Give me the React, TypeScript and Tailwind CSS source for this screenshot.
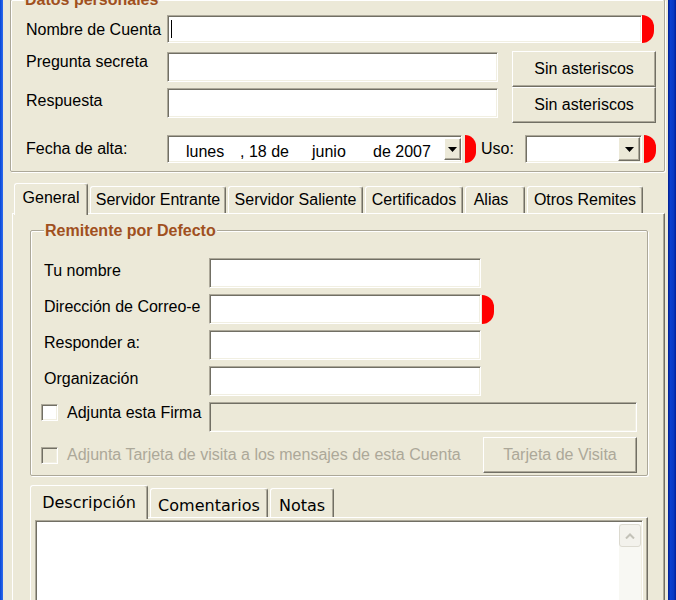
import React from "react";

const sunken =
  "border border-t-[#aca899] border-l-[#aca899] border-b-white border-r-white shadow-[inset_1px_1px_0_#716f64,inset_-1px_-1px_0_#f1efe2]";
const raised =
  "border border-t-white border-l-white border-b-[#716f64] border-r-[#716f64] shadow-[inset_-1px_-1px_0_#aca899]";

type Kids = { className?: string; children?: React.ReactNode; disabled?: boolean };

function Marker({ className = "" }: { className?: string }) {
  return <div className={`shrink-0 rounded-r-full bg-[#ff0000] ${className}`} />;
}

function Input({ className = "", disabled = false, children }: Kids) {
  return (
    <div
      className={`box-border flex shrink-0 items-center ${sunken} ${
        disabled ? "bg-[#ece9d8]" : "bg-white"
      } ${className}`}
    >
      {children}
    </div>
  );
}

function Button({ className = "", disabled = false, children }: Kids) {
  return (
    <button
      type="button"
      className={`box-border flex shrink-0 items-center justify-center bg-[#ece9d8] ${raised} ${
        disabled ? "text-[#aca899]" : "text-black"
      } ${className}`}
    >
      {children}
    </button>
  );
}

function DropButton({ className = "" }: { className?: string }) {
  return (
    <div
      className={`box-border flex shrink-0 items-center justify-center bg-[#ece9d8] ${raised} ${className}`}
    >
      <svg width="9" height="5" viewBox="0 0 9 5">
        <path d="M0 0h9L4.5 5z" fill="#000" />
      </svg>
    </div>
  );
}

function Checkbox({ disabled = false }: { disabled?: boolean }) {
  return (
    <div
      className={`box-border h-[17px] w-[17px] shrink-0 ${sunken} ${
        disabled ? "bg-[#ece9d8]" : "bg-white"
      }`}
    />
  );
}

function GroupBox({
  title,
  className = "",
  children,
}: {
  title: string;
  className?: string;
  children: React.ReactNode;
}) {
  return (
    <div
      className={`relative box-border rounded-[2px] border border-[#aca899] shadow-[inset_1px_1px_0_white,1px_1px_0_white] ${className}`}
    >
      <span className="absolute left-[13px] top-[-9px] bg-[#ece9d8] px-[1px] text-[16px] font-bold leading-[18px] text-[#a0501e]">
        {title}
      </span>
      {children}
    </div>
  );
}

function Tab({
  label,
  className = "",
  selected = false,
}: {
  label: string;
  className?: string;
  selected?: boolean;
}) {
  return (
    <div
      className={`relative box-border flex shrink-0 justify-center whitespace-nowrap rounded-t-[3px] border-l border-r border-t border-l-white border-r-[#716f64] border-t-white bg-[#ece9d8] shadow-[inset_-1px_0_0_#aca899] ${
        selected ? "z-10 -mb-[2px]" : ""
      } ${className}`}
    >
      {label}
    </div>
  );
}

export default function App() {
  return (
    <div className="flex h-[600px] w-[676px] overflow-hidden bg-[#ece9d8] font-['Liberation_Sans',Arial,sans-serif] text-[16px] leading-[18px] text-black">
      <div className="w-[3px] shrink-0 bg-[linear-gradient(to_right,#0847d4,#2f6cf0)]" />

      <div className="flex w-[665px] shrink-0 flex-col">
        {/* Datos personales */}
        <GroupBox
          title="Datos personales"
          className="-mt-[1px] ml-[7px] w-[655px] pb-[8px] pl-[15px] pt-[15px]"
        >
          <div className="flex h-[28px] items-center">
            <span className="mt-[1px] w-[141px] shrink-0">Nombre de Cuenta</span>
            <Input className="h-[28px] w-[475px]">
              <span className="ml-[3px] h-[18px] w-px bg-black" />
            </Input>
            <Marker className="h-[28px] w-[12px]" />
          </div>

          <div className="mt-[8px] flex h-[36px] items-start">
            <span className="w-[141px] shrink-0 pt-[2px]">Pregunta secreta</span>
            <Input className="mt-[1px] h-[30px] w-[331px]" />
            <Button className="ml-[14px] h-[36px] w-[144px]">Sin asteriscos</Button>
          </div>

          <div className="flex h-[36px] items-start">
            <span className="w-[141px] shrink-0 pt-[5px]">Respuesta</span>
            <Input className="mt-[1px] h-[30px] w-[331px]" />
            <Button className="ml-[14px] h-[36px] w-[144px]">Sin asteriscos</Button>
          </div>

          <div className="mt-[12px] flex h-[28px] items-center">
            <span className="w-[141px] shrink-0">Fecha de alta:</span>
            <Input className="h-[28px] w-[295px] pl-[18px]">
              <div className="mt-[5px] flex">
                <span className="w-[54px] shrink-0">lunes</span>
                <span className="w-[72px] shrink-0">, 18 de</span>
                <span className="w-[61px] shrink-0">junio</span>
                <span className="shrink-0">de 2007</span>
              </div>
              <DropButton className="ml-auto h-[22px] w-[17px]" />
            </Input>
            <Marker className="ml-[3px] h-[28px] w-[11px]" />
            <span className="ml-[5px] w-[44px] shrink-0">Uso:</span>
            <Input className="h-[28px] w-[117px] justify-end pr-[1px]">
              <DropButton className="h-[24px] w-[22px]" />
            </Input>
            <Marker className="ml-[2px] h-[28px] w-[12px]" />
          </div>
        </GroupBox>

        {/* Main tabs */}
        <div className="ml-[9px] mt-[11px] flex items-end pl-[2px]">
          <Tab label="General" selected className="h-[32px] w-[74px] pt-[5px]" />
          <Tab label="Servidor Entrante" className="ml-[2px] h-[27px] w-[136px] items-center" />
          <Tab label="Servidor Saliente" className="ml-[2px] h-[27px] w-[135px] items-center" />
          <Tab label="Certificados" className="ml-[2px] h-[27px] w-[98px] items-center" />
          <Tab label="Alias" className="ml-[2px] h-[27px] w-[60px] items-center pr-[8px]" />
          <Tab label="Otros Remites" className="ml-[2px] h-[27px] w-[116px] items-center" />
        </div>

        <div className="ml-[9px] box-border h-[420px] w-[653px] shrink-0 border-l border-r border-t border-l-white border-r-[#716f64] border-t-white shadow-[inset_-1px_0_0_#aca899]">
          <GroupBox
            title="Remitente por Defecto"
            className="ml-[17px] mt-[16px] w-[618px] pb-[2px] pl-[13px] pr-[10px] pt-[27px]"
          >
            <div className="flex h-[30px] items-center">
              <span className="mb-[4px] w-[165px] shrink-0">Tu nombre</span>
              <Input className="h-[30px] w-[272px]" />
            </div>
            <div className="mt-[6px] flex h-[30px] items-center">
              <span className="mb-[4px] w-[165px] shrink-0">Dirección de Correo-e</span>
              <Input className="h-[30px] w-[272px]" />
              <Marker className="ml-[1px] h-[29px] w-[12px]" />
            </div>
            <div className="mt-[6px] flex h-[30px] items-center">
              <span className="mb-[4px] w-[165px] shrink-0">Responder a:</span>
              <Input className="h-[30px] w-[272px]" />
            </div>
            <div className="mt-[6px] flex h-[30px] items-center">
              <span className="mb-[4px] w-[165px] shrink-0">Organización</span>
              <Input className="h-[30px] w-[272px]" />
            </div>
            <div className="mt-[6px] flex h-[30px] items-center">
              <div className="-ml-[3px] mb-[9px] flex w-[168px] shrink-0 items-center">
                <Checkbox />
                <span className="ml-[9px] whitespace-nowrap">Adjunta esta Firma</span>
              </div>
              <Input disabled className="h-[30px] flex-1" />
            </div>
            <div className="mt-[5px] flex h-[36px] items-center">
              <div className="-ml-[3px] flex items-center">
                <Checkbox disabled />
                <span className="ml-[9px] whitespace-nowrap text-[#aca899]">
                  Adjunta Tarjeta de visita a los mensajes de esta Cuenta
                </span>
              </div>
              <Button disabled className="ml-auto h-[36px] w-[154px]">
                Tarjeta de Visita
              </Button>
            </div>
          </GroupBox>

          {/* Lower tabs */}
          <div className="ml-[17px] mt-[9px] flex items-end font-['DejaVu_Sans',Verdana,sans-serif] leading-[19px]">
            <Tab label="Descripción" selected className="h-[34px] w-[118px] pt-[7px]" />
            <Tab label="Comentarios" className="ml-[2px] h-[29px] w-[118px] pt-[7px]" />
            <Tab label="Notas" className="ml-[2px] h-[29px] w-[64px] pt-[7px]" />
          </div>

          <div className="ml-[17px] box-border h-[120px] w-[618px] border-l border-r border-t border-l-white border-r-[#716f64] border-t-white pl-[4px] pt-[2px] shadow-[inset_-1px_0_0_#aca899]">
            <div className={`box-border flex h-[120px] w-[608px] justify-end bg-white pr-[1px] pt-[3px] ${sunken}`}>
              <div className="flex w-[22px] flex-col bg-[#f8f8f3]">
                <div className="box-border flex h-[23px] items-center justify-center rounded-[3px] border border-[#dcdad0] bg-[#f3f2ec]">
                  <svg width="10" height="6" viewBox="0 0 10 6">
                    <path d="M1 5.5L5 1.5L9 5.5" fill="none" stroke="#c3c2b8" strokeWidth="2" />
                  </svg>
                </div>
              </div>
            </div>
          </div>
        </div>
      </div>

      <div className="w-[8px] shrink-0 bg-[linear-gradient(to_right,#001a8c,#0b3fd0_30%,#0a38c2_70%,#00209c)]" />
    </div>
  );
}
